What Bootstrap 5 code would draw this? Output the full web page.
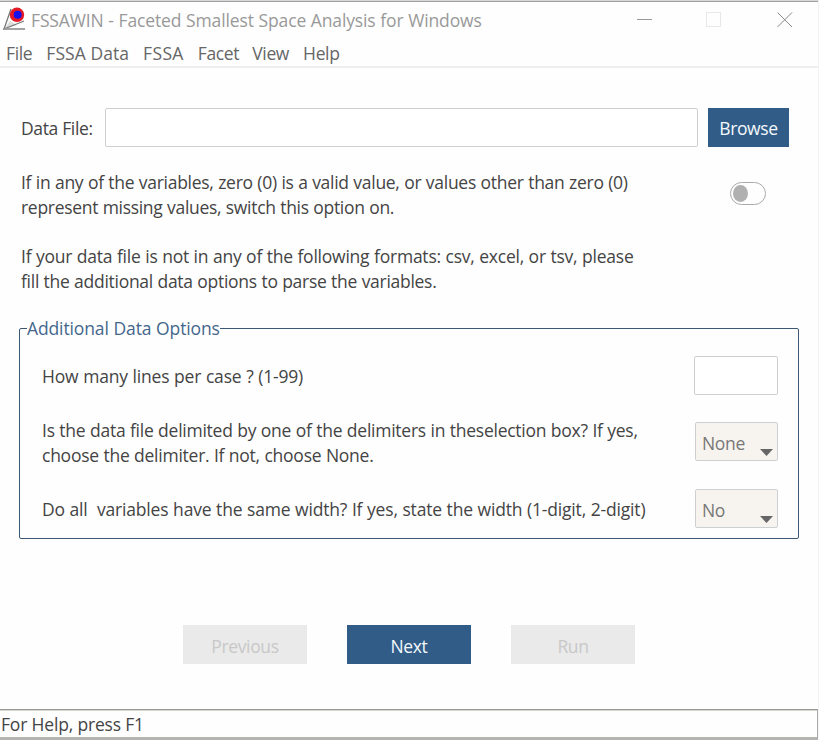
<!DOCTYPE html>
<html lang="en">
<head>
<meta charset="utf-8">
<title>FSSAWIN</title>
<link href="https://cdn.jsdelivr.net/npm/bootstrap@5.3.0/dist/css/bootstrap.min.css" rel="stylesheet">
<style>
body{font-family:"Open Sans","Noto Sans",sans-serif;font-size:17.5px;line-height:25px;color:#444;letter-spacing:-.35px;background:#fefefe}
.win{width:819px;height:740px;border-top:1px solid #d8d8d8;border-right:1px solid #f3f3f3;overflow:hidden}
.titlebar{height:39px;border-top:1px solid #a0a0a0;padding:0 25px 2px 3px;color:#999}
.titlebar .caption{margin-left:5px;letter-spacing:-.13px;word-spacing:.3px}
.appicon{margin-top:-3px}
.menubar{height:28px;border-bottom:2px solid #efefef;padding:0 6px;color:#666;gap:14px}
.menubar a{color:inherit;text-decoration:none}
.menubar .m1{letter-spacing:.06px}
.menubar .m2{letter-spacing:.35px}
.menubar .m3{margin-left:-1px}
.content{padding:40px 20px 0 21px}
.box,.pick{height:39px;border:1px solid #ccd0d2;border-radius:2px;background:#fff}
.lines{width:84px}
.pick{width:83px;background:#f7f4f0;color:#777;padding:3px 4px 0 6px}
.pick svg{margin-top:19px}
.lab{padding-top:2px;margin-right:12px}
.tool{height:39px;border-radius:0;border:0;font-size:inherit;line-height:25px;padding:2px 0 0;letter-spacing:inherit;background:#315c87;color:#f4f8fc}
.tool:disabled{background:#eaeaea;color:#c8c8c8;opacity:1}
.wide{width:124px;padding-top:3px}
.browse{width:81px;margin-left:10px;margin-right:9px}
.intro{margin-top:23px}
.intro + .intro{margin-top:24px}
.toggle{width:36px;height:23px;border:1px solid #aaa;border-radius:12px;padding:0 2px;margin:12px 32px 0 auto}
.knob{width:15px;height:17px;border-radius:50%;background:#b0b0b0}
.opts{border:1px solid #3c5872;border-radius:2px;padding:0 20px 0 22px;margin:22px 0 0 -2px;width:780px;height:223px}
.opts legend{float:none;width:auto;font-size:inherit;line-height:25px;margin:0 0 0 -15px;padding:0;color:#44668c;letter-spacing:-.12px;word-spacing:.3px}
.row-lines{margin-top:15px}
.row-delim{margin-top:23px}
.row-delim .pick{margin-top:4px}
.row-width{margin-top:21px}
.row-lines .q,.row-width .q{padding-top:2px}
.ln{display:block;white-space:pre;word-spacing:.3px}
.s18{letter-spacing:-.175px}.s23{letter-spacing:-.225px}.s24{letter-spacing:-.25px}.s27{letter-spacing:-.28px}.s30{letter-spacing:-.3px}
.actions{gap:40px;padding-right:1px;margin-top:86px}
.status{height:31px;border-top:1px solid #999a92;border-bottom:3px solid #b4b4b0;border-right:1px solid #aaa;padding:2px 0 0 1px;letter-spacing:-.18px;box-shadow:inset 0 1px #d4d4d0}
</style>
</head>
<body>
<div class="win d-flex flex-column">
<header class="titlebar d-flex align-items-center flex-shrink-0">
<svg class="appicon" width="23" height="24" viewBox="0 0 23 24"><path d="M1.500 22L7 14 14 18Z" fill="#bbb" opacity=".5"/><path d="M8 2L1 22L21 14" stroke="#777" stroke-width="1.3" fill="none"/><path d="M0 22H22" stroke="#999" stroke-width="1.800"/><circle cx="14" cy="7.800" r="7.200" fill="#e51825"/><circle cx="14.700" cy="7.800" r="4" fill="#1510ee"/></svg>
<span class="caption">FSSAWIN - Faceted Smallest Space Analysis for Windows</span>
<svg class="ms-auto" width="156" height="17" viewBox="0 0 156 17" fill="none"><path d="M0 7.500H15" stroke="#999"/><rect x="69.500" y="0.500" width="14" height="14" stroke="#e8e8e8"/><path d="M140.500 0.500L155 15M155 0.500L140.500 15" stroke="#888"/></svg>
</header>
<nav class="menubar d-flex align-items-center flex-shrink-0"><a href="#">File</a><a href="#" class="m1">FSSA Data</a><a href="#" class="m2">FSSA</a><a href="#">Facet</a><a href="#" class="m3">View</a><a href="#">Help</a></nav>
<main class="content flex-grow-1">
<div class="d-flex align-items-center"><label class="lab" for="datafile">Data File:</label><input id="datafile" class="box flex-grow-1"><button class="btn tool browse">Browse</button></div>
<div class="d-flex intro"><div><span class="ln s27">If in any of the variables, zero (0) is a valid value, or values other than zero (0)</span><span class="ln s30">represent missing values, switch this option on.</span></div><div class="toggle d-flex align-items-center"><div class="knob"></div></div></div>
<div class="intro"><span class="ln s23">If your data file is not in any of the following formats: csv, excel, or tsv, please</span><span class="ln s27">fill the additional data options to parse the variables.</span></div>
<fieldset class="opts"><legend>Additional Data Options</legend>
<div class="row-lines d-flex justify-content-between align-items-center"><div class="q"><span class="ln s18">How many lines per case ? (1-99)</span></div><input class="box lines" aria-label="Lines per case"></div>
<div class="row-delim d-flex justify-content-between align-items-start"><div class="q"><span class="ln s24">Is the data file delimited by one of the delimiters in theselection box? If yes,</span><span class="ln s24">choose the delimiter. If not, choose None.</span></div><div class="pick d-flex justify-content-between align-items-center"><span>None</span><svg width="13" height="7" viewBox="0 0 13 7"><path d="M0 0H13L6.500 7Z" fill="#666"/></svg></div></div>
<div class="row-width d-flex justify-content-between align-items-center"><div class="q"><span class="ln s18">Do all  variables have the same width? If yes, state the width (1-digit, 2-digit)</span></div><div class="pick d-flex justify-content-between align-items-center"><span>No</span><svg width="13" height="7" viewBox="0 0 13 7"><path d="M0 0H13L6.500 7Z" fill="#666"/></svg></div></div>
</fieldset>
<div class="actions d-flex justify-content-center"><button class="btn tool wide" disabled>Previous</button><button class="btn tool wide">Next</button><button class="btn tool wide" disabled>Run</button></div>
</main>
<footer class="status flex-shrink-0">For Help, press F1</footer>
</div>
<script src="https://cdn.jsdelivr.net/npm/bootstrap@5.3.0/dist/js/bootstrap.bundle.min.js"></script>
</body>
</html>
